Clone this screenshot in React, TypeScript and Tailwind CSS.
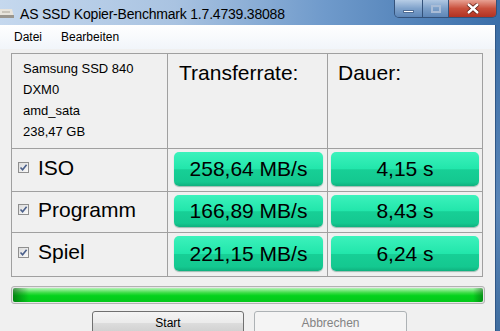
import React from 'react';

const font = { fontFamily: '"Liberation Sans", Arial, sans-serif' };

interface Row {
  label: string;
  rate: string;
  time: string;
  pad: string;
}

const rows: Row[] = [
  { label: 'ISO', rate: '258,64 MB/s', time: '4,15 s', pad: 'h-[43px]' },
  { label: 'Programm', rate: '166,89 MB/s', time: '8,43 s', pad: 'h-[41px]' },
  { label: 'Spiel', rate: '221,15 MB/s', time: '6,24 s', pad: 'h-[43px]' },
];

const Check = () => (
  <span className="w-[11px] h-[11px] border border-[#8f8f8f] bg-gradient-to-br from-[#dcdcdc] to-[#fafafa] flex items-center justify-center shrink-0">
    <svg width="9" height="9" viewBox="0 0 9 9">
      <path d="M1.5 4.5 L3.6 6.8 L7.6 1.8" fill="none" stroke="#4a5f8a" strokeWidth="1.6" />
    </svg>
  </span>
);

const Value = ({ text }: { text: string }) => (
  <div className="h-full rounded-[5px] bg-[linear-gradient(to_bottom,#3cf2bc_0%,#22e6ab_50%,#17cf96_52%,#14c890_88%,#0fb07e_100%)] shadow-[0_1px_1px_rgba(0,90,60,0.35)] flex items-center justify-center text-[21px] text-black">
    {text}
  </div>
);

export default function App() {
  return (
    <div className="w-[500px] h-[331px] overflow-hidden flex flex-col bg-[#f0f0f0]" style={font}>
      {/* title bar */}
      <div className="h-[25px] shrink-0 flex items-start bg-[linear-gradient(to_right,#c5d8ee_0%,#a9c3e1_35%,#6f9acb_65%,#3a6ea9_100%)]">
        <svg width="16" height="25" viewBox="0 0 16 25" className="shrink-0">
          <path d="M0 9 L12 9 L14 17 L0 17 Z" fill="#e8e4dc" />
          <path d="M0 15 L14 15 L14 18 L0 18 Z" fill="#9a968e" />
          <rect x="2" y="11" width="8" height="2" fill="#c9c4ba" />
        </svg>
        <span className="ml-[4px] mt-[4px] text-[14px] tracking-[-0.2px] text-black whitespace-nowrap">
          AS SSD Kopier-Benchmark 1.7.4739.38088
        </span>
        <div className="ml-auto mr-[3px] flex h-[18px] border border-t-0 border-[#34527a] rounded-b-[5px] overflow-hidden">
          <div className="w-[28px] bg-[linear-gradient(to_bottom,#b7cde6,#7fa2cb_50%,#5d86b8)] border-r border-[#34527a] flex items-center justify-center">
            <span className="w-[11px] h-[3px] bg-white mt-[5px] border border-[#506d95]" />
          </div>
          <div className="w-[26px] bg-[linear-gradient(to_bottom,#b0c7e2,#7c9fc8_50%,#5e86b7)] border-r border-[#34527a] flex items-center justify-center">
            <span className="w-[10px] h-[8px] border-2 border-[#a9bcd6]" />
          </div>
          <div className="w-[47px] bg-[linear-gradient(to_bottom,#e8a193,#c9503c_50%,#b23222)] flex items-center justify-center">
            <svg width="14" height="11" viewBox="0 0 14 11">
              <path d="M2 1 L12 10 M12 1 L2 10" stroke="#5a1a12" strokeWidth="4" />
              <path d="M2 1 L12 10 M12 1 L2 10" stroke="#ffffff" strokeWidth="2.4" />
            </svg>
          </div>
        </div>
      </div>

      <div className="flex-1 flex min-h-0">
        <div className="flex-1 flex flex-col min-w-0">
          {/* menu */}
          <div className="h-[24px] shrink-0 flex items-center gap-[19px] pl-[14px] text-[12px] text-black bg-[linear-gradient(to_bottom,#ffffff,#f1f5fa)]">
            <span>Datei</span>
            <span>Bearbeiten</span>
          </div>

          <div className="flex-1 pl-[11px] pt-[4px]">
            {/* table */}
            <div className="w-[472px] border border-[#a0a0a0] grid grid-cols-[156px_160px_154px]">
              <div className="h-[95px] border-r border-b border-[#a0a0a0] pl-[11px] pt-[4px] text-[13px] leading-[21px] text-black">
                <div>Samsung SSD 840</div>
                <div>DXM0</div>
                <div>amd_sata</div>
                <div>238,47 GB</div>
              </div>
              <div className="h-[95px] border-r border-b border-[#a0a0a0] pl-[11px] pt-[3px] text-[21px] text-black">
                Transferrate:
              </div>
              <div className="h-[95px] border-b border-[#a0a0a0] pl-[10px] pt-[3px] text-[21px] text-black">
                Dauer:
              </div>
              {rows.map((r, i) => {
                const last = i === rows.length - 1;
                return (
                  <React.Fragment key={r.label}>
                    <div className={`${r.pad} border-r border-[#a0a0a0] ${last ? '' : 'border-b'} flex items-center gap-[9px] pl-[6px] pb-[5px] text-[21px] text-black`}>
                      <Check />
                      <span>{r.label}</span>
                    </div>
                    <div className={`${r.pad} border-r border-[#a0a0a0] ${last ? '' : 'border-b'} pl-[6px] pr-[4px] pt-[3px] pb-[5px]`}>
                      <Value text={r.rate} />
                    </div>
                    <div className={`${r.pad} border-[#a0a0a0] ${last ? '' : 'border-b'} pl-[3px] pr-[3px] pt-[3px] pb-[5px]`}>
                      <Value text={r.time} />
                    </div>
                  </React.Fragment>
                );
              })}
            </div>

            {/* progress */}
            <div className="mt-[9px] w-[474px] h-[18px] rounded-[3px] border border-[#b2b2b2] p-px bg-[#e6e6e6]">
              <div className="h-full rounded-[2px] bg-[linear-gradient(to_bottom,#b6f5b8_0%,#39dc44_35%,#05d21d_55%,#03c81a_100%)] relative overflow-hidden">
                <div className="absolute left-0 top-0 bottom-0 w-[16px] bg-[linear-gradient(to_right,rgba(0,70,10,0.55),rgba(0,70,10,0))]" />
                <div className="absolute right-0 top-0 bottom-0 w-[10px] bg-[linear-gradient(to_left,rgba(0,70,10,0.45),rgba(0,70,10,0))]" />
              </div>
            </div>

            {/* buttons */}
            <div className="mt-[7px] flex gap-[10px] pl-[81px]">
              <button className="w-[152px] h-[23px] rounded-[3px] border border-[#707070] bg-[linear-gradient(to_bottom,#f4f4f4_0%,#ebebeb_50%,#dddddd_51%,#cfcfcf_100%)] text-[12px] text-black">
                Start
              </button>
              <button className="w-[153px] h-[23px] rounded-[3px] border border-[#adb2b5] bg-[#f4f4f4] text-[12px] text-[#838383]">
                Abbrechen
              </button>
            </div>
          </div>
        </div>
        {/* right frame */}
        <div className="w-[5px] shrink-0 bg-[linear-gradient(to_bottom,#3c6ea6,#5b86b8_60%,#3f6d9f)] border-l border-[#2f5686]" />
      </div>
    </div>
  );
}
